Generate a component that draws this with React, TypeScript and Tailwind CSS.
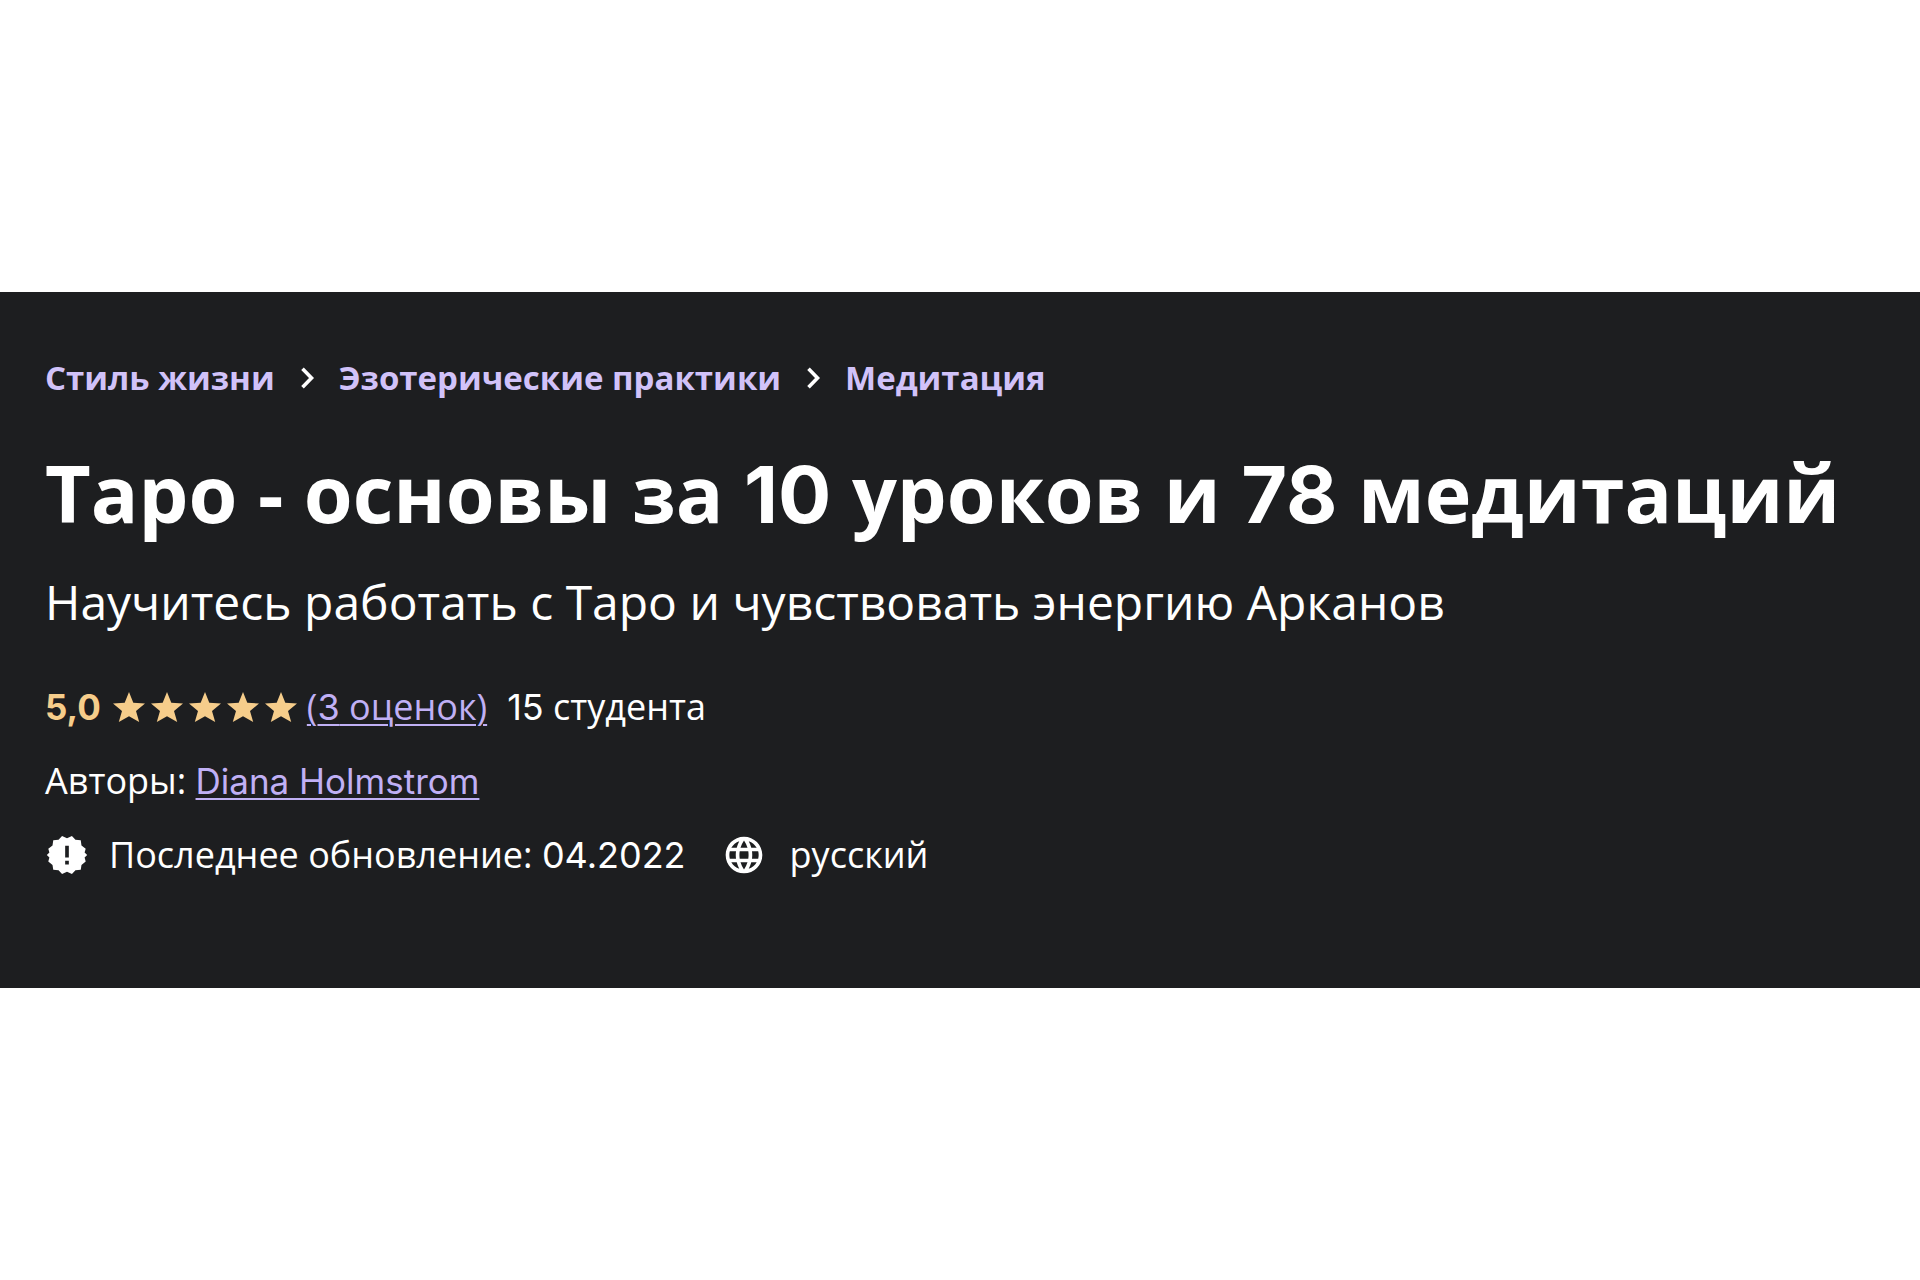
import { Fragment } from 'react';

const CATEGORIES = ['Стиль жизни', 'Эзотерические практики', 'Медитация'];

const STARS = [1, 2, 3, 4, 5];

function ChevronIcon() {
  return (
    <svg viewBox="0 0 16 26" className="w-4 h-[26px] shrink-0" fill="none" stroke="#fff" strokeWidth="3.6" aria-hidden="true">
      <path d="M3.5 3.8 12.5 13 3.5 22.2" />
    </svg>
  );
}

function StarIcon() {
  return (
    <svg viewBox="0 0 32 30" className="w-8 h-[30px]" fill="#f6cd8b" aria-hidden="true">
      <path d="M16 0 L20.3 10.8 L32 11.5 L23 19 L26.2 30 L16 24.2 L5.8 30 L9 19 L0 11.5 L11.7 10.8 Z" />
    </svg>
  );
}

// scalloped badge with an exclamation mark
function UpdatedIcon() {
  return (
    <svg viewBox="0 0 24 24" className="w-11 h-11 shrink-0" aria-hidden="true">
      <path fill="#fff" d="M12 2.9 14.7 1.6 16.6 3.7 19.5 4 19.9 6.8 22.2 8.6 21.6 10.6 23 12 21.6 13.4 22.2 15.6 19.9 17.4 19.5 20 16.6 20.3 14.7 22.4 12 21.1 9.3 22.4 7.4 20.3 4.5 20 4.1 17.4 1.8 15.6 2.4 13.4 1 12 2.4 10.6 1.8 8.6 4.1 6.8 4.5 4 7.4 3.7 9.3 1.6Z" />
      <path fill="#1d1e20" d="M11 7h2v6.3h-2zM11 15.2h2v2h-2z" />
    </svg>
  );
}

function GlobeIcon() {
  return (
    <svg viewBox="0 0 24 24" className="w-11 h-11 shrink-0" fill="#fff" aria-hidden="true">
      <path d="M11.99 2C6.47 2 2 6.48 2 12s4.47 10 9.99 10C17.52 22 22 17.52 22 12S17.52 2 11.99 2zm6.93 6h-2.95c-.32-1.25-.78-2.45-1.38-3.56 1.84.63 3.37 1.91 4.33 3.56zM12 4.04c.83 1.2 1.48 2.53 1.91 3.96h-3.82c.43-1.43 1.08-2.76 1.91-3.96zM4.26 14C4.1 13.36 4 12.69 4 12s.1-1.36.26-2h3.38c-.08.66-.14 1.32-.14 2s.06 1.34.14 2H4.26zm.82 2h2.95c.32 1.25.78 2.45 1.38 3.56-1.84-.63-3.37-1.9-4.33-3.56zm2.95-8H5.08c.96-1.66 2.49-2.93 4.33-3.56C8.81 5.55 8.35 6.75 8.03 8zM12 19.96c-.83-1.2-1.48-2.53-1.91-3.96h3.82c-.43 1.43-1.08 2.76-1.91 3.96zM14.34 14H9.66c-.09-.66-.16-1.32-.16-2s.07-1.35.16-2h4.68c.09.65.16 1.32.16 2s-.07 1.34-.16 2zm.25 5.56c.6-1.11 1.06-2.31 1.38-3.56h2.95c-.96 1.65-2.49 2.93-4.33 3.56zM16.36 14c.08-.66.14-1.32.14-2s-.06-1.34-.14-2h3.38c.16.64.26 1.31.26 2s-.1 1.36-.26 2h-3.38z" />
    </svg>
  );
}

export default function App() {
  return (
    <main className="min-h-screen bg-white flex flex-col justify-center font-['Open_Sans','Noto_Sans',sans-serif]">
      <header className="bg-[#1d1e20] text-white px-[45px] pt-[61px] pb-[108px] text-[36px] leading-[50px]">
        <nav aria-label="Категории" className="flex items-center gap-6 font-bold text-[33px]">
          {CATEGORIES.map((name, i) => (
            <Fragment key={name}>
              {i > 0 && <ChevronIcon />}
              <a href="#" className="text-[#d1c2f9]">{name}</a>
            </Fragment>
          ))}
        </nav>

        <h1 className="mt-[34px] text-[79px] leading-[112px] font-bold">
          Таро - основы за <span className="font-['Inter']">10</span> уроков и <span className="font-['Inter']">78</span> медитаций
        </h1>

        <p className="mt-5 text-[48px] leading-[64px]">Научитесь работать с Таро и чувствовать энергию Арканов</p>

        <div className="mt-12 flex items-center">
          <span className="font-['Inter'] font-bold text-[35px] text-[#f6cd8b]">5,0</span>
          <span className="ml-3 flex gap-1.5" role="img" aria-label="5 из 5">
            {STARS.map(n => <StarIcon key={n} />)}
          </span>
          <a href="#" className="ml-2.5 text-[#c0b0f5] underline decoration-2 underline-offset-4">
            (<span className="font-['Inter']">3</span> оценок)
          </a>
          <span className="ml-5"><span className="font-['Inter']">15</span> студента</span>
        </div>

        <p className="mt-6">
          Авторы: <a href="#" className="font-['Inter'] text-[35px] text-[#c0b0f5] underline decoration-2 underline-offset-4">Diana Holmstrom</a>
        </p>

        <div className="mt-6 flex items-center">
          <UpdatedIcon />
          <span className="ml-5">Последнее обновление: <span className="font-['Inter']">04.2022</span></span>
          <span className="ml-9"><GlobeIcon /></span>
          <span className="ml-6">русский</span>
        </div>
      </header>
    </main>
  );
}
